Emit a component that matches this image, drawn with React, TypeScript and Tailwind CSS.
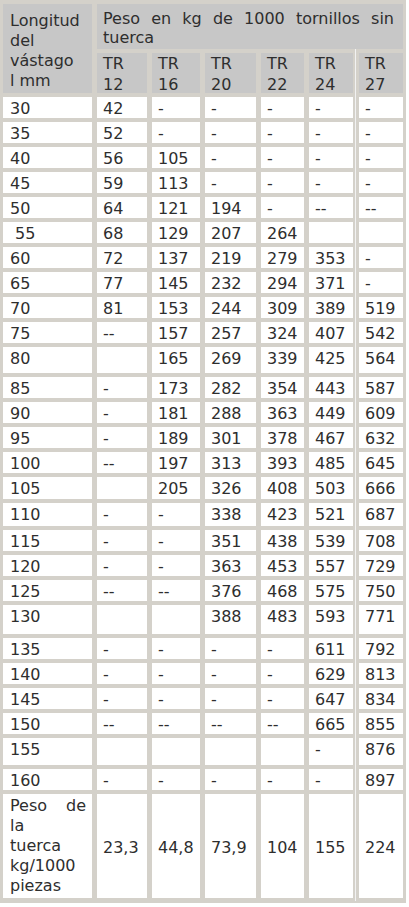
import React from 'react';

type Row = {
  label: string;
  values: string[];
  h: string;
};

const rows: Row[] = [
  { label: '30', values: ['42', '-', '-', '-', '-', '-'], h: 'h-[21px]' },
  { label: '35', values: ['52', '-', '-', '-', '-', '-'], h: 'h-[21px]' },
  { label: '40', values: ['56', '105', '-', '-', '-', '-'], h: 'h-[21px]' },
  { label: '45', values: ['59', '113', '-', '-', '-', '-'], h: 'h-[21px]' },
  { label: '50', values: ['64', '121', '194', '-', '--', '--'], h: 'h-[21px]' },
  { label: '\u00a055', values: ['68', '129', '207', '264', '', ''], h: 'h-[21px]' },
  { label: '60', values: ['72', '137', '219', '279', '353', '-'], h: 'h-[21px]' },
  { label: '65', values: ['77', '145', '232', '294', '371', '-'], h: 'h-[21px]' },
  { label: '70', values: ['81', '153', '244', '309', '389', '519'], h: 'h-[21px]' },
  { label: '75', values: ['--', '157', '257', '324', '407', '542'], h: 'h-[21px]' },
  { label: '80', values: ['', '165', '269', '339', '425', '564'], h: 'h-[26px]' },
  { label: '85', values: ['-', '173', '282', '354', '443', '587'], h: 'h-[21px]' },
  { label: '90', values: ['-', '181', '288', '363', '449', '609'], h: 'h-[21px]' },
  { label: '95', values: ['-', '189', '301', '378', '467', '632'], h: 'h-[21px]' },
  { label: '100', values: ['--', '197', '313', '393', '485', '645'], h: 'h-[21px]' },
  { label: '105', values: ['', '205', '326', '408', '503', '666'], h: 'h-[22px]' },
  { label: '110', values: ['-', '-', '338', '423', '521', '687'], h: 'h-[23px]' },
  { label: '115', values: ['-', '-', '351', '438', '539', '708'], h: 'h-[21px]' },
  { label: '120', values: ['-', '-', '363', '453', '557', '729'], h: 'h-[21px]' },
  { label: '125', values: ['--', '--', '376', '468', '575', '750'], h: 'h-[21px]' },
  { label: '130', values: ['', '', '388', '483', '593', '771'], h: 'h-[29px]' },
  { label: '135', values: ['-', '-', '-', '-', '611', '792'], h: 'h-[21px]' },
  { label: '140', values: ['-', '-', '-', '-', '629', '813'], h: 'h-[21px]' },
  { label: '145', values: ['-', '-', '-', '-', '647', '834'], h: 'h-[21px]' },
  { label: '150', values: ['--', '--', '--', '--', '665', '855'], h: 'h-[21px]' },
  { label: '155', values: ['', '', '', '', '-', '876'], h: 'h-[27px]' },
  { label: '160', values: ['-', '-', '-', '-', '-', '897'], h: 'h-[21px]' },
];

const sizes = ['12', '16', '20', '22', '24', '27'];
const nutWeights = ['23,3', '44,8', '73,9', '104', '155', '224'];

export default function App() {
  return (
    <div className="min-h-screen bg-white font-['DejaVu_Sans',Verdana,sans-serif] text-[16px] text-[#2e2e2e]">
      <div className="relative w-[406px] bg-[#d4d1ca] pl-[3px] pr-[3px] pt-[4px] pb-[5px]">
        <div className="grid grid-cols-[89px_50px_48px_51px_43px_44px_45px] gap-x-[5px] gap-y-[4px]">
          {/* header */}
          <div className="row-span-2 bg-[#c7c7c7] pl-[7px] pt-[7px] leading-[20px]">
            <div>Longitud</div>
            <div>del</div>
            <div>vástago</div>
            <div>l mm</div>
          </div>
          <div className="col-span-6 h-[45px] bg-[#c7c7c7] pl-[6px] pr-[9px] pt-[5px] leading-[19px]">
            <div className="flex justify-between">
              <span>Peso</span>
              <span>en</span>
              <span>kg</span>
              <span>de</span>
              <span>1000</span>
              <span>tornillos</span>
              <span>sin</span>
            </div>
            <div>tuerca</div>
          </div>
          {sizes.map((s, i) => (
            <div
              key={s}
              className={`h-[40px] bg-[#c7c7c7] pl-[6px] leading-[21px] ${i === 5 ? 'ml-[1px]' : ''}`}
            >
              <div>TR</div>
              <div>{s}</div>
            </div>
          ))}

          {/* body */}
          {rows.map((row) => (
            <React.Fragment key={row.label}>
              <div className={`${row.h} bg-white pl-[7px] pt-[1px] leading-[21px]`}>{row.label}</div>
              {row.values.map((v, i) => (
                <div
                  key={i}
                  className={`${row.h} bg-white pl-[6px] pt-[1px] leading-[21px] ${i === 5 ? 'ml-[1px]' : ''}`}
                >
                  {v}
                </div>
              ))}
            </React.Fragment>
          ))}

          {/* nut weight */}
          <div className="h-[104px] bg-white pl-[7px] pr-[6px] pt-[2px] leading-[20px]">
            <div className="flex justify-between">
              <span>Peso</span>
              <span>de</span>
            </div>
            <div>la</div>
            <div>tuerca</div>
            <div>kg/1000</div>
            <div>piezas</div>
          </div>
          {nutWeights.map((w, i) => (
            <div
              key={w}
              className={`flex h-[104px] items-center bg-white pl-[6px] pt-[4px] leading-[20px] ${i === 5 ? 'ml-[1px]' : ''}`}
            >
              {w}
            </div>
          ))}
        </div>
        <div className="absolute left-[355px] top-[49px] bottom-[2px] w-px bg-[#f2f2f2]" />
      </div>
    </div>
  );
}
